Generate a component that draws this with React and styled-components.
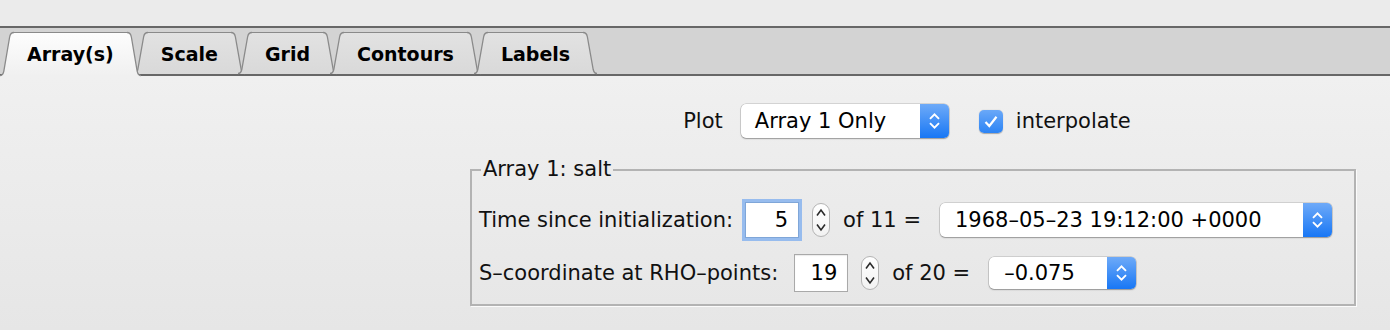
import React from 'react';
import styled, { createGlobalStyle } from 'styled-components';

const GlobalStyle = createGlobalStyle`
  html, body {
    margin: 0;
    padding: 0;
    background: #ebebeb;
  }
  body {
    font-family: "DejaVu Sans", "Liberation Sans", sans-serif;
    color: #111;
  }
  #root {
    height: 330px;
  }
`;

const Page = styled.div`
  height: 330px;
  box-sizing: border-box;
  padding-top: 26px;
  display: flex;
  flex-direction: column;
  overflow: hidden;
`;

const TabStrip = styled.div`
  display: flex;
  align-items: flex-end;
  height: 42px;
  padding-top: 4px;
  background: #d3d3d3;
  border-top: 2px solid #676767;
  border-bottom: 2px solid #676767;
`;

const TabItem = styled.div`
  position: relative;
  z-index: ${(p) => (p.$active ? 3 : 1)};
  display: flex;
  height: ${(p) => (p.$active ? 44 : 42)}px;
  margin-bottom: ${(p) => (p.$active ? -2 : 0)}px;

  & + & {
    margin-left: -7px;
  }
`;

const TabBody = styled.div`
  display: flex;
  align-items: center;
  box-sizing: border-box;
  padding: 0 13px ${(p) => (p.$active ? 2 : 0)}px;
  border-top: 1px solid #8a8a8a;
  background: ${(p) =>
    p.$active ? 'linear-gradient(#fdfdfd, #f0f0f0)' : 'linear-gradient(#e2e2e2, #d9d9d9)'};
  font-size: 19px;
  font-weight: bold;
  color: #000;
`;

const CapSvg = styled.svg`
  width: 14px;
  height: 100%;
  flex: none;
  overflow: visible;
  transform: ${(p) => (p.$side === 'right' ? 'scaleX(-1)' : 'none')};
`;

const Content = styled.div`
  flex: 1;
  display: flex;
  justify-content: flex-end;
  padding: 28px 34px 0 0;
  background: linear-gradient(#f0f0f0, #e6e6e6);
`;

const Panel = styled.div`
  display: flex;
  flex-direction: column;
  align-items: center;
`;

const PlotRow = styled.div`
  display: flex;
  align-items: center;
  height: 34px;
  margin-right: 12px;
`;

const Text = styled.span`
  font-size: 21px;
  line-height: 25px;
  white-space: nowrap;
  margin-right: ${(p) => p.$mr || 0}px;
`;

const ComboBox = styled.div`
  display: flex;
  flex: none;
  width: ${(p) => p.$w}px;
  height: ${(p) => p.$h || 34}px;
  margin-right: ${(p) => p.$mr || 0}px;
  border-radius: 5px;
  background: #fff;
  box-shadow: 0 0 0 0.5px rgba(0, 0, 0, 0.22), 0 1px 1.5px rgba(0, 0, 0, 0.28);
  overflow: hidden;
`;

const ComboValue = styled.span`
  flex: 1;
  display: flex;
  align-items: center;
  padding-left: ${(p) => p.$pl}px;
  font-size: 21px;
  white-space: nowrap;
  color: #000;
`;

const ComboArrows = styled.span`
  width: 29px;
  display: flex;
  align-items: center;
  justify-content: center;
  background: linear-gradient(#6eaaf8, #1877f5);
`;

const CheckBox = styled.span`
  width: 24px;
  height: 23px;
  margin-right: 13px;
  border-radius: 5px;
  display: flex;
  align-items: center;
  justify-content: center;
  background: linear-gradient(#6aa8f8, #2c84f5);
  box-shadow: 0 0.5px 1px rgba(0, 0, 0, 0.3);
`;

const Group = styled.fieldset`
  display: flex;
  flex-direction: column;
  gap: 15px;
  min-width: 0;
  margin: 19px 0 0;
  padding: 19px 22px 12px 7px;
  border: 2px solid #b3b3b3;
  box-shadow: 1px 1px 0 #fbfbfb;
`;

const Legend = styled.legend`
  margin-left: 2px;
  padding: 0 2px;
  font-size: 21px;
  line-height: 25px;
`;

const Row = styled.div`
  display: flex;
  align-items: center;
  height: 38px;
`;

const NumberField = styled.span`
  width: 54px;
  height: ${(p) => p.$h}px;
  box-sizing: border-box;
  margin-right: 13px;
  display: flex;
  align-items: center;
  justify-content: flex-end;
  padding-right: 10px;
  background: #fff;
  font-size: 21px;
  color: #000;
  border: 1px solid ${(p) => (p.$focused ? '#7fa6d8' : '#a9a9a9')};
  box-shadow: ${(p) => (p.$focused ? '0 0 0 3px #97bcee' : 'inset 0 1px 1px rgba(0,0,0,0.08)')};
`;

const Stepper = styled.span`
  width: 18px;
  height: 34px;
  box-sizing: border-box;
  margin-right: 13px;
  border: 1px solid #b4b4b4;
  border-radius: 9px;
  display: flex;
  align-items: center;
  justify-content: center;
  background: linear-gradient(#ffffff, #f2f2f2);
`;

const tabs = ['Array(s)', 'Scale', 'Grid', 'Contours', 'Labels'];

const CURVE = 'C2.6 41.5 3.2 40 3.8 37.5 L9.6 5 C10.1 2 11.5 0.5 14 0.5';

function TabCap({ name, side, active }) {
  const id = `cap-${name.replace(/[^a-z]/gi, '')}-${side}`;
  const top = active ? '#fdfdfd' : '#e2e2e2';
  const bottom = active ? '#f0f0f0' : '#d9d9d9';
  return (
    <CapSvg $side={side} viewBox="0 0 14 42" preserveAspectRatio="none">
      <defs>
        <linearGradient id={id} x1="0" y1="0" x2="0" y2="1">
          <stop offset="0" stopColor={top} />
          <stop offset="1" stopColor={bottom} />
        </linearGradient>
      </defs>
      <path d={`M0 42 L0 41.5 ${CURVE} L14 42 Z`} fill={`url(#${id})`} />
      <path d={`M0 41.5 ${CURVE}`} fill="none" stroke="#8a8a8a" strokeWidth="1.3" vectorEffect="non-scaling-stroke" />
    </CapSvg>
  );
}

function Tab({ name, active }) {
  return (
    <TabItem $active={active}>
      <TabCap name={name} side="left" active={active} />
      <TabBody $active={active}>{name}</TabBody>
      <TabCap name={name} side="right" active={active} />
    </TabItem>
  );
}

function ComboArrowIcon() {
  return (
    <svg width="11" height="18" viewBox="0 0 11 18">
      <path d="M1 6.8 L5.5 2.3 L10 6.8 M1 11.2 L5.5 15.7 L10 11.2" fill="none" stroke="#fff" strokeWidth="1.9" />
    </svg>
  );
}

function Combo({ value, width, height, pad, mr }) {
  return (
    <ComboBox $w={width} $h={height} $mr={mr}>
      <ComboValue $pl={pad}>{value}</ComboValue>
      <ComboArrows>
        <ComboArrowIcon />
      </ComboArrows>
    </ComboBox>
  );
}

function StepperArrows() {
  return (
    <Stepper>
      <svg width="10" height="26" viewBox="0 0 10 26">
        <path d="M1 8.5 L5 3 L9 8.5 M1 17.5 L5 23 L9 17.5" fill="none" stroke="#2a2a2a" strokeWidth="1.6" />
      </svg>
    </Stepper>
  );
}

function DimRow({ label, labelGap, value, count, selected, comboWidth, comboHeight, focused, fieldHeight }) {
  return (
    <Row>
      <Text $mr={labelGap}>{label}</Text>
      <NumberField $focused={focused} $h={fieldHeight}>{value}</NumberField>
      <StepperArrows />
      <Text $mr={19}>of {count} =</Text>
      <Combo value={selected} width={comboWidth} height={comboHeight} pad={15} />
    </Row>
  );
}

export default function App() {
  return (
    <Page>
      <GlobalStyle />
      <TabStrip>
        {tabs.map((t, i) => (
          <Tab key={t} name={t} active={i === 0} />
        ))}
      </TabStrip>
      <Content>
        <Panel>
          <PlotRow>
            <Text $mr={18}>Plot</Text>
            <Combo value="Array 1 Only" width={208} pad={14} mr={30} />
            <CheckBox>
              <svg width="16" height="15" viewBox="0 0 16 15">
                <path d="M2.5 8 L6.3 12 L13.5 2.8" fill="none" stroke="#fff" strokeWidth="2.2" />
              </svg>
            </CheckBox>
            <Text>interpolate</Text>
          </PlotRow>
          <Group>
            <Legend>Array 1: salt</Legend>
            <DimRow
              label="Time since initialization:"
              labelGap={12}
              value="5"
              count={11}
              selected="1968–05–23 19:12:00 +0000"
              comboWidth={392}
              comboHeight={34}
              focused
              fieldHeight={36}
            />
            <DimRow
              label="S–coordinate at RHO–points:"
              labelGap={16}
              value="19"
              count={20}
              selected="–0.075"
              comboWidth={147}
              comboHeight={32}
              fieldHeight={38}
            />
          </Group>
        </Panel>
      </Content>
    </Page>
  );
}
